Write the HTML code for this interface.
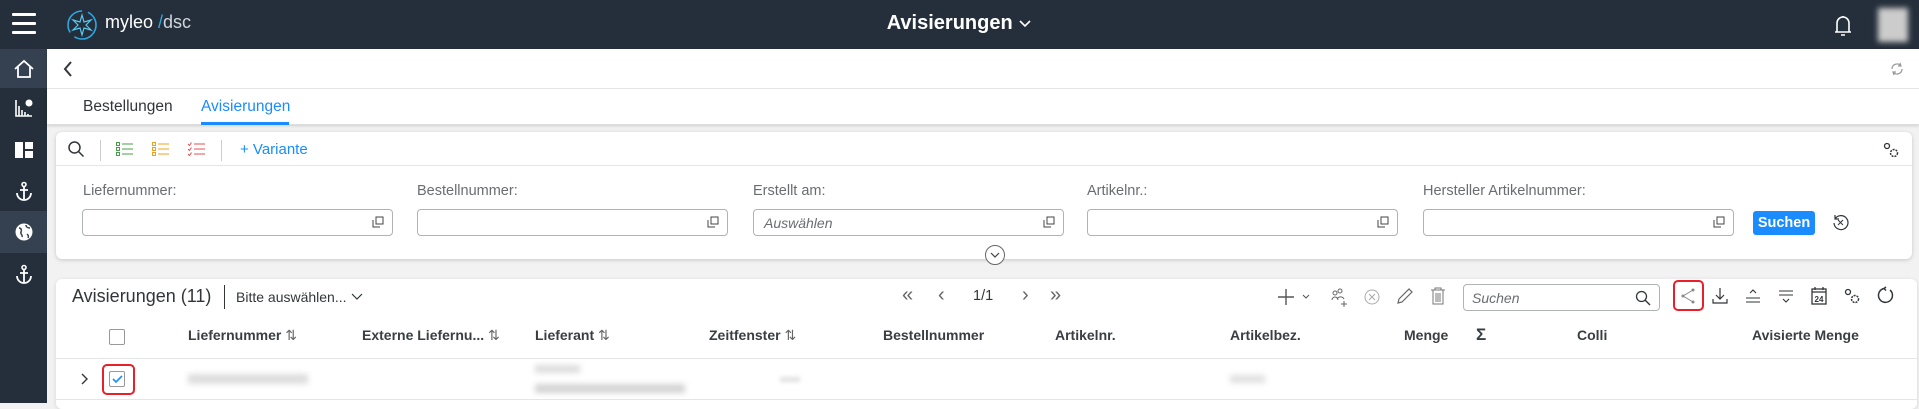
<!DOCTYPE html>
<html><head><meta charset="utf-8"><style>
*{box-sizing:border-box;margin:0;padding:0}
body{width:1919px;height:403px;overflow:hidden;background:#f2f2f2;font-family:"Liberation Sans","DejaVu Sans",sans-serif;color:#32363a;position:relative}
.a{position:absolute}
.top{left:0;top:0;width:1919px;height:49px;background:#252f3b}
.side{left:0;top:49px;width:47px;height:354px;background:#252f3b}
.si{position:absolute;left:0;width:47px;display:flex;align-items:center;justify-content:center}
.lbl{font-size:14.5px;color:#6a6d70}
.inp{position:absolute;top:209px;height:27px;border:1px solid #b0b3b6;border-radius:4px;background:#fff}
.cp{position:absolute;right:8px;top:6px;width:12px;height:12px}
.th{position:absolute;top:327px;font-size:14px;font-weight:bold;color:#3a3e42}
.ic{position:absolute}
</style></head><body>
<div class="a top"></div>
<div class="a" style="left:12px;top:13px;width:24px;height:3px;background:#fff;border-radius:1px"></div>
<div class="a" style="left:12px;top:22px;width:24px;height:3px;background:#fff;border-radius:1px"></div>
<div class="a" style="left:12px;top:31px;width:24px;height:3px;background:#fff;border-radius:1px"></div>
<svg class="a" style="left:65px;top:8px" width="34" height="34" viewBox="0 0 34 34"><circle cx="17" cy="17" r="14" fill="none" stroke="#2aa9e0" stroke-width="1.6" stroke-dasharray="30 6"/><path d="M17 7l2 7 7-2-5 5 5 5-7-2-2 7-2-7-7 2 5-5-5-5 7 2z" fill="none" stroke="#5ac8f0" stroke-width="1.2"/></svg>
<div class="a" style="left:105px;top:12px;font-size:18px;color:#fff">myleo<span style="color:#2aa9e0"> /</span><span style="color:#cfd6dd">dsc</span></div>
<div class="a" style="left:0;width:1919px;top:12px;text-align:center;font-size:20px;color:#fff;font-weight:600">Avisierungen <svg width="14" height="10" viewBox="0 0 14 10"><path d="M2 2l5 5 5-5" fill="none" stroke="#fff" stroke-width="1.6"/></svg></div>
<svg class="a" style="left:1832px;top:14px" width="22" height="24" viewBox="0 0 22 24"><path d="M5 18V9a6 6 0 0 1 12 0v9M3 18h16M9 21h4M11 2v1" fill="none" stroke="#fff" stroke-width="1.6"/></svg>
<div class="a" style="left:1878px;top:8px;width:30px;height:34px;background:#ccc;filter:blur(3px)"></div>
<div class="a side"></div>
<div class="si" style="top:49px;height:39px;background:#354150"><svg width="22" height="20" viewBox="0 0 22 20"><path d="M2 10L11 2l9 8M5 8v10h12V8" fill="none" stroke="#fff" stroke-width="1.8"/></svg></div>
<div class="si" style="top:88px;height:40px"><svg width="20" height="20" viewBox="0 0 20 20"><path d="M2 2v16h16M5 18V8M8 18v-6M11 18v-4M14 18v-2" stroke="#fff" stroke-width="1.6" fill="none"/><circle cx="15" cy="5" r="3.5" fill="#fff"/></svg></div>
<div class="si" style="top:128px;height:43px"><svg width="18" height="16" viewBox="0 0 18 16"><rect x="0" y="0" width="8" height="16" fill="#fff"/><rect x="10" y="0" width="8" height="7" fill="#fff"/><rect x="10" y="9" width="8" height="7" fill="#fff"/></svg></div>
<div class="si" style="top:171px;height:40px"><svg width="20" height="20" viewBox="0 0 20 20"><circle cx="10" cy="3.5" r="2" fill="none" stroke="#fff" stroke-width="1.6"/><path d="M10 5.5V18M6 9h8M3 12a7 7 0 0 0 14 0" fill="none" stroke="#fff" stroke-width="1.8"/></svg></div>
<div class="si" style="top:211px;height:42px;background:#354150"><svg width="20" height="20" viewBox="0 0 20 20"><circle cx="10" cy="10" r="8.5" fill="#fff"/><path d="M5 6c2 0 3 2 2 4s2 3 1 5M12 3c0 2 2 3 4 3M13 12c1 1 2 2 1 4" stroke="#354150" stroke-width="1.5" fill="none"/></svg></div>
<div class="si" style="top:253px;height:41px"><svg width="20" height="20" viewBox="0 0 20 20"><circle cx="10" cy="3.5" r="2" fill="none" stroke="#fff" stroke-width="1.6"/><path d="M10 5.5V18M6 9h8M3 12a7 7 0 0 0 14 0" fill="none" stroke="#fff" stroke-width="1.8"/></svg></div>
<div class="a" style="left:47px;top:49px;width:1872px;height:76px;background:#fff;border-bottom:1px solid #ddd;box-shadow:0 1px 3px rgba(0,0,0,.15)"></div>
<div class="a" style="left:47px;top:88px;width:1872px;height:1px;background:#e5e5e5"></div>
<svg class="a" style="left:62px;top:60px" width="12" height="18" viewBox="0 0 12 18"><path d="M9 2L3 9l6 7" fill="none" stroke="#32363a" stroke-width="2"/></svg>
<svg class="a" style="left:1888px;top:60px" width="18" height="18" viewBox="0 0 18 18"><path d="M4 9a5 5 0 0 1 9-3M14 9a5 5 0 0 1-9 3M12 3l1 3-3 0M6 15l-1-3 3 0" fill="none" stroke="#999" stroke-width="1.2"/></svg>
<div class="a" style="left:83px;top:98px;font-size:15.5px;color:#32363a">Bestellungen</div>
<div class="a" style="left:201px;top:98px;font-size:15.5px;color:#1a8cff">Avisierungen</div>
<div class="a" style="left:201px;top:122px;width:88px;height:3px;background:#1a8cff"></div>
<div class="a" style="left:56px;top:132px;width:1856px;height:127px;background:#fff;border-radius:6px;box-shadow:0 1px 4px rgba(0,0,0,.18)"></div>
<div class="a" style="left:56px;top:165px;width:1856px;height:1px;background:#e5e5e5"></div>
<svg class="a" style="left:67px;top:140px" width="18" height="18" viewBox="0 0 18 18"><circle cx="7.5" cy="7.5" r="5.5" fill="none" stroke="#32363a" stroke-width="1.5"/><path d="M11.5 11.5l5 5" stroke="#32363a" stroke-width="1.5"/></svg>
<div class="a" style="left:100px;top:140px;width:1px;height:21px;background:#ccc"></div>
<svg class="a" style="left:116px;top:142px" width="18" height="14" viewBox="0 0 18 14"><g fill="none" stroke="#4a9e4a" stroke-width="1"><rect x="0.5" y="0.5" width="3" height="3"/><rect x="0.5" y="5.5" width="3" height="3"/><rect x="0.5" y="10.5" width="3" height="3"/><path d="M6 2h11M6 7h11M6 12h11"/></g></svg>
<svg class="a" style="left:152px;top:142px" width="18" height="14" viewBox="0 0 18 14"><g fill="none" stroke="#f0a020" stroke-width="1"><rect x="0.5" y="0.5" width="3" height="3"/><rect x="0.5" y="5.5" width="3" height="3"/><rect x="0.5" y="10.5" width="3" height="3"/><path d="M6 2h11M6 7h11M6 12h11"/></g></svg>
<svg class="a" style="left:188px;top:142px" width="18" height="14" viewBox="0 0 18 14"><g fill="none" stroke="#e05050" stroke-width="1"><path d="M0 2l1.5 1.5L3.5 0.5M0 7l1.5 1.5L3.5 5.5M0 12l1.5 1.5L3.5 10.5M6 2h11M6 7h11M6 12h11"/></g></svg>
<div class="a" style="left:221px;top:140px;width:1px;height:21px;background:#ccc"></div>
<div class="a" style="left:240px;top:141px;font-size:15px;color:#1a8cff">+ Variante</div>
<svg class="a" style="left:1882px;top:141px" width="18" height="18" viewBox="0 0 18 18"><circle cx="5" cy="5" r="2.5" fill="none" stroke="#32363a" stroke-width="1.3"/><circle cx="12" cy="12" r="3.5" fill="none" stroke="#32363a" stroke-width="1.5" stroke-dasharray="2 1"/></svg>
<div class="a lbl" style="left:83px;top:183px">Liefernummer:</div>
<div class="a lbl" style="left:417px;top:183px">Bestellnummer:</div>
<div class="a lbl" style="left:753px;top:183px">Erstellt am:</div>
<div class="a lbl" style="left:1087px;top:183px">Artikelnr.:</div>
<div class="a lbl" style="left:1423px;top:183px">Hersteller Artikelnummer:</div>
<div class="inp" style="left:82px;width:311px"><svg class="cp" viewBox="0 0 12 12"><path d="M1 4v7h7M4 1h7v7H4z" fill="none" stroke="#444" stroke-width="1"/></svg></div>
<div class="inp" style="left:417px;width:311px"><svg class="cp" viewBox="0 0 12 12"><path d="M1 4v7h7M4 1h7v7H4z" fill="none" stroke="#444" stroke-width="1"/></svg></div>
<div class="inp" style="left:753px;width:311px"><span style="position:absolute;left:10px;top:5px;font-size:14px;font-style:italic;color:#6a6d70">Auswählen</span><svg class="cp" viewBox="0 0 12 12"><path d="M1 4v7h7M4 1h7v7H4z" fill="none" stroke="#444" stroke-width="1"/></svg></div>
<div class="inp" style="left:1087px;width:311px"><svg class="cp" viewBox="0 0 12 12"><path d="M1 4v7h7M4 1h7v7H4z" fill="none" stroke="#444" stroke-width="1"/></svg></div>
<div class="inp" style="left:1423px;width:311px"><svg class="cp" viewBox="0 0 12 12"><path d="M1 4v7h7M4 1h7v7H4z" fill="none" stroke="#444" stroke-width="1"/></svg></div>
<div class="a" style="left:1753px;top:211px;width:62px;height:24px;background:#1a8cff;border-radius:3px;color:#fff;font-weight:bold;font-size:14.5px;text-align:center;line-height:24px">Suchen</div>
<svg class="a" style="left:1832px;top:214px" width="17" height="17" viewBox="0 0 17 17"><path d="M3 5a7 7 0 1 1-1 4M3 1v4h4" fill="none" stroke="#32363a" stroke-width="1.2"/><path d="M6 6l5 5M11 6l-5 5" stroke="#32363a" stroke-width="1"/></svg>
<div class="a" style="left:985px;top:245px;width:20px;height:20px;border-radius:50%;background:#fff;border:1px solid #666"><svg width="18" height="18" viewBox="0 0 18 18"><path d="M5 7l4 4 4-4" fill="none" stroke="#444" stroke-width="1.2"/></svg></div>
<div class="a" style="left:56px;top:279px;width:1861px;height:130px;background:#fff;border-radius:6px;box-shadow:0 1px 4px rgba(0,0,0,.12)"></div>
<div class="a" style="left:72px;top:286px;font-size:18px;color:#32363a">Avisierungen (11)</div>
<div class="a" style="left:224px;top:285px;width:1px;height:24px;background:#32363a"></div>
<div class="a" style="left:236px;top:289px;font-size:14px;color:#32363a">Bitte auswählen... <svg width="14" height="10" viewBox="0 0 14 10"><path d="M2 2l5 5 5-5" fill="none" stroke="#32363a" stroke-width="1.2"/></svg></div>
<div class="a" style="left:902px;top:284px;font-size:20px;color:#666">«</div>
<div class="a" style="left:938px;top:284px;font-size:20px;color:#666">‹</div>
<div class="a" style="left:973px;top:288px;font-size:14.5px;color:#32363a">1/1</div>
<div class="a" style="left:1022px;top:284px;font-size:20px;color:#666">›</div>
<div class="a" style="left:1050px;top:284px;font-size:20px;color:#666">»</div>
<svg class="a" style="left:1277px;top:288px" width="40" height="18" viewBox="0 0 40 18"><path d="M9 1v16M1 9h16" stroke="#555" stroke-width="1.4"/><path d="M26 7l3 3 3-3" fill="none" stroke="#555"/></svg>
<svg class="a" style="left:1330px;top:287px" width="20" height="20" viewBox="0 0 20 20"><g fill="none" stroke="#666" stroke-width="1"><circle cx="5" cy="6" r="2"/><circle cx="10" cy="4" r="2"/><path d="M2 13a3 3 0 0 1 6 0M7 12a4 4 0 0 1 7 0M14 14v6M11 17h6"/></g></svg>
<svg class="a" style="left:1363px;top:288px" width="18" height="18" viewBox="0 0 18 18"><circle cx="9" cy="9" r="7" fill="none" stroke="#aaa"/><path d="M6 6l6 6M12 6l-6 6" stroke="#aaa"/></svg>
<svg class="a" style="left:1396px;top:287px" width="18" height="18" viewBox="0 0 18 18"><path d="M2 16l1-4L13 2l3 3L6 15z" fill="none" stroke="#666" stroke-width="1.2"/></svg>
<svg class="a" style="left:1429px;top:287px" width="18" height="18" viewBox="0 0 18 18"><path d="M2 3h14M6 3V1h6v2M4 3v14h10V3M7 6v9M9 6v9M11 6v9" fill="none" stroke="#777" stroke-width="1"/></svg>
<div class="a" style="left:1463px;top:284px;width:197px;height:27px;border:1px solid #b0b3b6;border-radius:4px"><span style="position:absolute;left:8px;top:5px;font-size:14px;font-style:italic;color:#6a6d70">Suchen</span><svg style="position:absolute;right:8px;top:5px" width="16" height="16" viewBox="0 0 16 16"><circle cx="6.5" cy="6.5" r="5" fill="none" stroke="#32363a" stroke-width="1.3"/><path d="M10 10l5 5" stroke="#32363a" stroke-width="1.4"/></svg></div>
<div class="a" style="left:1673px;top:280px;width:31px;height:31px;border:2px solid #e8202a;border-radius:5px"></div>
<svg class="a" style="left:1679px;top:287px" width="18" height="18" viewBox="0 0 18 18"><path d="M14 3L4 9l10 6" fill="none" stroke="#888" stroke-width="1"/><circle cx="14" cy="3" r="1.5" fill="#888"/><circle cx="4" cy="9" r="1.5" fill="#888"/><circle cx="14" cy="15" r="1.5" fill="#888"/></svg>
<svg class="a" style="left:1711px;top:287px" width="18" height="18" viewBox="0 0 18 18"><path d="M9 1v11M5 8l4 4 4-4M2 12v4h14v-4" fill="none" stroke="#32363a" stroke-width="1.2"/></svg>
<svg class="a" style="left:1744px;top:287px" width="18" height="18" viewBox="0 0 18 18"><path d="M6 6l3-3 3 3M2 11h14M2 15h14" fill="none" stroke="#32363a" stroke-width="1.1"/></svg>
<svg class="a" style="left:1777px;top:287px" width="18" height="18" viewBox="0 0 18 18"><path d="M2 4h14M2 8h14M6 12l3 3 3-3" fill="none" stroke="#32363a" stroke-width="1.1"/></svg>
<svg class="a" style="left:1810px;top:286px" width="18" height="19" viewBox="0 0 18 19"><rect x="2" y="3" width="14" height="15" fill="none" stroke="#32363a" stroke-width="1.3"/><path d="M2 6h14M5 1v3M13 1v3" stroke="#32363a" stroke-width="1.3"/><text x="9" y="16" font-size="8" text-anchor="middle" font-family="Liberation Sans" fill="#32363a" font-weight="bold">24</text></svg>
<svg class="a" style="left:1843px;top:287px" width="18" height="18" viewBox="0 0 18 18"><circle cx="5" cy="5" r="2.5" fill="none" stroke="#32363a" stroke-width="1.3"/><circle cx="12" cy="12" r="3.5" fill="none" stroke="#32363a" stroke-width="1.5" stroke-dasharray="2 1"/></svg>
<svg class="a" style="left:1876px;top:286px" width="19" height="19" viewBox="0 0 19 19"><path d="M14 4a7 7 0 1 1-6-1.5M10 1l-2 1.5 2 2" fill="none" stroke="#32363a" stroke-width="1.5"/></svg>
<div class="a" style="left:109px;top:329px;width:16px;height:16px;border:1.5px solid #999;border-radius:2px"></div>
<div class="th" style="left:188px">Liefernummer <span style="font-weight:normal;color:#666">⇅</span></div>
<div class="th" style="left:362px">Externe Liefernu... <span style="font-weight:normal;color:#666">⇅</span></div>
<div class="th" style="left:535px">Lieferant <span style="font-weight:normal;color:#666">⇅</span></div>
<div class="th" style="left:709px">Zeitfenster <span style="font-weight:normal;color:#666">⇅</span></div>
<div class="th" style="left:883px">Bestellnummer</div>
<div class="th" style="left:1055px">Artikelnr.</div>
<div class="th" style="left:1230px">Artikelbez.</div>
<div class="th" style="left:1404px">Menge</div>
<div class="th" style="left:1476px;font-size:17px;top:325px">Σ</div>
<div class="th" style="left:1577px">Colli</div>
<div class="th" style="left:1752px">Avisierte Menge</div>
<div class="a" style="left:56px;top:358px;width:1861px;height:1px;background:#e5e5e5"></div>
<svg class="a" style="left:79px;top:372px" width="10" height="14" viewBox="0 0 10 14"><path d="M3 2l5 5-5 5" fill="none" stroke="#32363a" stroke-width="1.4"/></svg>
<div class="a" style="left:102px;top:364px;width:33px;height:31px;border:2px solid #e8202a;border-radius:5px"></div>
<div class="a" style="left:109px;top:371px;width:16px;height:16px;border:1.5px solid #999;border-radius:2px;background:#fff"><svg width="14" height="14" viewBox="0 0 14 14" style="position:absolute;left:0;top:0"><path d="M3 7l3 3 6-6" fill="none" stroke="#1a8cff" stroke-width="1.6"/></svg></div>
<div class="a" style="left:188px;top:374px;width:120px;height:10px;background:#ddd;filter:blur(3px)"></div>
<div class="a" style="left:535px;top:365px;width:45px;height:8px;background:#ddd;filter:blur(3px)"></div>
<div class="a" style="left:535px;top:384px;width:150px;height:9px;background:#d4d4d4;filter:blur(3px)"></div>
<div class="a" style="left:780px;top:377px;width:20px;height:5px;background:#e0e0e0;filter:blur(2px)"></div>
<div class="a" style="left:1230px;top:375px;width:35px;height:8px;background:#e0e0e0;filter:blur(3px)"></div>
<div class="a" style="left:56px;top:399px;width:1861px;height:1px;background:#e5e5e5"></div>
</body></html>
